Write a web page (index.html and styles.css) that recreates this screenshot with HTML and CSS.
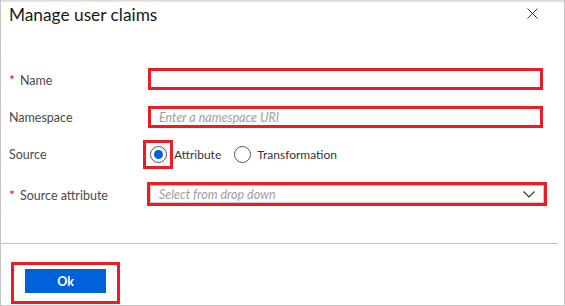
FILE: index.html
```html
<!DOCTYPE html>
<html lang="en">
<head>
    <meta charset="UTF-8">
    <meta name="viewport" content="width=device-width, initial-scale=1.0">
    <title>Manage user claims</title>
    <link rel="stylesheet" href="styles.css">
</head>
<body>
    <div class="panel">
        <div class="header">
            <h1>Manage user claims</h1>
            <button class="close-button" aria-label="Close">
                <svg width="11" height="11" viewBox="0 0 11 11"><path d="M0.5 0.5 L10.5 10.5 M10.5 0.5 L0.5 10.5" stroke="#333" stroke-width="1" fill="none"/></svg>
            </button>
        </div>

        <form class="claim-form">
            <div class="row row-name">
                <label class="required">Name</label>
                <input type="text" class="field">
            </div>
            <div class="row row-namespace">
                <label>Namespace</label>
                <input type="text" class="field" placeholder="Enter a namespace URI">
            </div>
            <div class="row row-source">
                <label>Source</label>
                <div class="radio-group">
                    <span class="radio-mark"><span class="radio checked"></span></span>
                    <span class="radio-text">Attribute</span>
                    <span class="radio"></span>
                    <span class="radio-text">Transformation</span>
                </div>
            </div>
            <div class="row row-attr">
                <label class="required">Source attribute</label>
                <div class="field select">
                    <span class="placeholder">Select from drop down</span>
                    <svg width="12" height="7" viewBox="0 0 12 7"><path d="M0.5 0.5 L6 6 L11.5 0.5" stroke="#333" stroke-width="1.2" fill="none"/></svg>
                </div>
            </div>
        </form>

        <div class="footer">
            <div class="ok-mark">
                <button type="button" class="ok-button">Ok</button>
            </div>
        </div>
    </div>
</body>
</html>
```

FILE: styles.css
```css
body {
    margin: 0;
    font-family: Lato, "Open Sans", Arial, sans-serif;
    background-color: #fff;
    color: #333;
}
.panel {
    width: 563px;
    height: 305px;
    border-left: 1px solid #c4c4c4;
    border-right: 1px solid #c4c4c4;
    border-bottom: 1px solid #c4c4c4;
    background: linear-gradient(#d4d4d4, #fff 3px);
    display: flex;
    flex-direction: column;
}
.header {
    display: flex;
    justify-content: space-between;
    align-items: flex-start;
    padding: 3px 26px 0 8px;
    height: 65px;
    box-sizing: border-box;
}
h1 {
    margin: 0;
    font-size: 17.3px;
    font-weight: normal;
    line-height: 24px;
    color: #1a1a1a;
}
.close-button {
    background: none;
    border: none;
    padding: 0;
    margin-top: 5px;
    width: 11px;
    height: 11px;
    cursor: pointer;
}
.close-button svg {
    display: block;
}
.claim-form {
    padding: 0 0 0 8px;
    margin-top: 3px;
}
.row {
    display: flex;
    align-items: center;
}
.row label {
    width: 139px;
    font-size: 12.5px;
    color: #4a4a4a;
    flex-shrink: 0;
}
.required::before {
    content: "*";
    color: #e81123;
    font-size: 14px;
    margin-right: 5px;
}
.field {
    box-sizing: border-box;
    width: 395px;
    height: 22px;
    border: 3px solid #ec1c24;
    outline: none;
    padding: 0 8px;
    font-family: inherit;
    font-size: 12.5px;
    background: #fff;
}
.field::placeholder {
    color: #9e9e9e;
    font-style: italic;
}
.row-name {
    height: 22px;
}
.row-namespace {
    height: 22px;
    margin-top: 16px;
}
.row-source {
    height: 29px;
    margin-top: 12px;
}
.row-attr {
    height: 24px;
    margin-top: 13px;
}
.radio-group {
    display: flex;
    align-items: center;
    margin-left: -5px;
    font-size: 12px;
    color: #333;
}
.radio-mark {
    box-sizing: border-box;
    width: 30px;
    height: 29px;
    border: 3px solid #ec1c24;
    display: flex;
    align-items: center;
    justify-content: center;
    padding-left: 1px;
}
.radio {
    box-sizing: border-box;
    width: 17px;
    height: 17px;
    border: 1px solid #555;
    border-radius: 50%;
    position: relative;
    flex-shrink: 0;
}
.radio.checked::after {
    content: "";
    position: absolute;
    left: 3px;
    top: 3px;
    width: 9px;
    height: 9px;
    border-radius: 50%;
    background-color: #0062d8;
}
.radio-text {
    margin-left: 1px;
    margin-right: 13px;
}
.radio-group .radio + .radio-text {
    margin-left: 6px;
}
.select {
    width: 400px;
    height: 24px;
    margin-left: -1px;
    display: flex;
    align-items: center;
    justify-content: space-between;
    padding: 0 9px 0 9px;
    box-shadow: inset 0 0 0 1px #c8c8c8;
}
.placeholder {
    color: #9e9e9e;
    font-style: italic;
}
.select svg {
    display: block;
}
.footer {
    margin-top: auto;
    border-top: 1px solid #c0c0c0;
    margin-right: 6px;
    height: 62px;
    box-sizing: border-box;
    padding: 18px 0 0 10px;
}
.ok-mark {
    box-sizing: border-box;
    width: 109px;
    height: 42px;
    border: 3px solid #ec1c24;
    padding: 4px 0 0 11px;
}
.ok-button {
    width: 81px;
    height: 24px;
    border: none;
    background-color: #0062d8;
    color: #fff;
    font-family: inherit;
    font-size: 12.5px;
    font-weight: bold;
    padding: 0;
    cursor: pointer;
}
```
